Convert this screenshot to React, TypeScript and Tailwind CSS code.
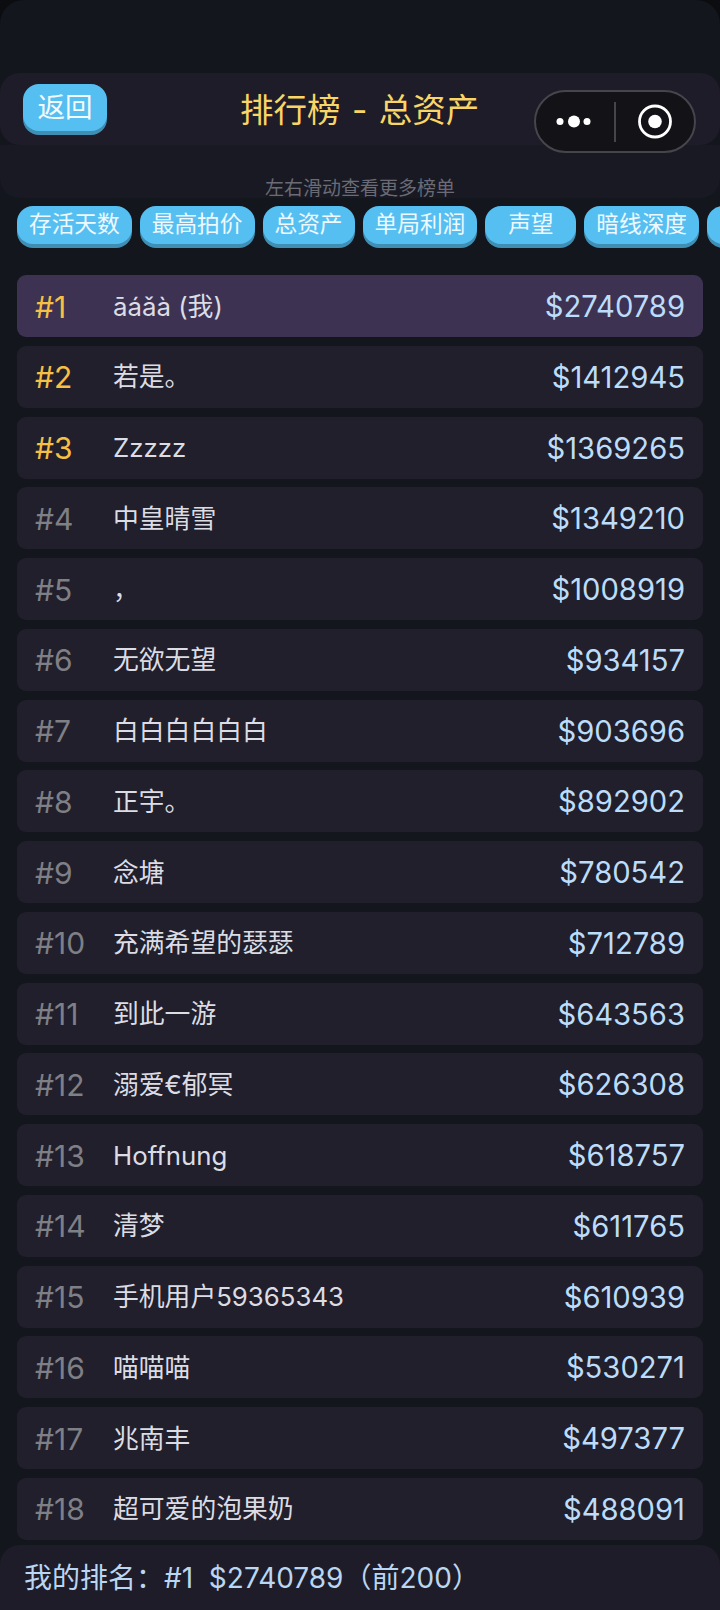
const tabs = ['存活天数', '最高拍价', '总资产', '单局利润', '声望', '暗线深度', ''];

const rows = [
  ['#1', 'āáǎà (我)', '$2740789'],
  ['#2', '若是。', '$1412945'],
  ['#3', 'Zzzzz', '$1369265'],
  ['#4', '中皇晴雪', '$1349210'],
  ['#5', '，', '$1008919'],
  ['#6', '无欲无望', '$934157'],
  ['#7', '白白白白白白', '$903696'],
  ['#8', '正宇。', '$892902'],
  ['#9', '念塘', '$780542'],
  ['#10', '充满希望的瑟瑟', '$712789'],
  ['#11', '到此一游', '$643563'],
  ['#12', '溺爱€郁冥', '$626308'],
  ['#13', 'Hoffnung', '$618757'],
  ['#14', '清梦', '$611765'],
  ['#15', '手机用户59365343', '$610939'],
  ['#16', '喵喵喵', '$530271'],
  ['#17', '兆南丰', '$497377'],
  ['#18', '超可爱的泡果奶', '$488091'],
];

function Capsule() {
  return (
    <div className="absolute left-[534px] top-[17px] flex h-[63px] w-[162px] items-center rounded-full border-2 border-[#45454b] bg-[#121217]">
      <svg width="78" height="59" viewBox="0 0 78 59" className="shrink-0">
        <circle cx="24" cy="29.5" r="3.5" fill="#fff" />
        <circle cx="38" cy="29.5" r="6" fill="#fff" />
        <circle cx="51" cy="29.5" r="3.5" fill="#fff" />
      </svg>
      <div className="h-10 w-0.5 shrink-0 bg-[#45454b]" />
      <svg width="80" height="59" viewBox="0 0 80 59" className="shrink-0">
        <circle cx="39" cy="29.5" r="15.5" fill="none" stroke="#fff" strokeWidth="2.8" />
        <circle cx="39" cy="29.5" r="6.8" fill="#fff" />
      </svg>
    </div>
  );
}

export default function App() {
  return (
    <div className="w-[720px] bg-[#0c0d11]">
      <div className="flex h-[1610px] w-[720px] flex-col overflow-hidden rounded-t-[24px] bg-[#14161d] font-['Inter','Noto_Sans_CJK_SC',sans-serif]">
        {/* Header */}
        <div className="relative mt-[73px] flex h-[72px] shrink-0 items-start rounded-[20px] bg-[#1e1c28]">
          <div className="ml-[23px] mt-[11px] flex h-[47px] w-[84px] items-start justify-center rounded-2xl bg-[#56bff2] pt-[2px] text-[27.5px] leading-[42px] text-[#f2fbff] shadow-[0_4px_0_#3f8fb5]">
            返回
          </div>
          <div className="ml-[133px] mt-[15px] text-[33.5px] leading-[44px] text-[#f9d566] [word-spacing:2px]">排行榜 - 总资产</div>
          <Capsule />
        </div>

        {/* Hint */}
        <div className="flex h-[53px] shrink-0 items-end justify-center rounded-b-[20px] bg-[#181923] text-[19px] leading-[18px] text-[#6a6b75]">
          左右滑动查看更多榜单
        </div>

        {/* Tabs */}
        <div className="mt-2 flex h-[42px] shrink-0 gap-2 overflow-hidden pl-[17px]">
          {tabs.map((tab, i) => (
            <div
              key={i}
              className="flex h-[38px] min-w-[91px] shrink-0 items-center justify-center whitespace-nowrap rounded-2xl bg-[#56bff2] px-3 pb-[2px] text-[22.7px] text-[#eef9ff] shadow-[0_4px_0_#3f8fb5]"
            >
              {tab}
            </div>
          ))}
        </div>

        {/* List */}
        <div className="mt-[27px] flex shrink-0 flex-col gap-[8.76px] px-[17px]">
          {rows.map(([rank, name, amount], i) => (
            <div
              key={rank}
              className={
                i === 0
                  ? 'flex h-[62px] items-center rounded-[9px] bg-[#3d3252] pl-[18px] pr-[18px] pt-[2px]'
                  : 'flex h-[62px] items-center rounded-[9px] bg-[#211f2b] pl-[18px] pr-[18px] pt-[2px]'
              }
            >
              <div className={i < 3 ? 'w-[78px] text-[30px] text-[#f5c044]' : 'w-[78px] text-[30px] text-[#7f7f86]'}>{rank}</div>
              <div className="flex-1 text-[25.8px] text-[#dcdce4]">{name}</div>
              <div className="text-[29.2px] text-[#bcdcfa]">{amount}</div>
            </div>
          ))}
        </div>

        {/* My rank */}
        <div className="mt-[5px] flex h-[65px] shrink-0 items-center rounded-t-[20px] bg-[#1e1c28] pl-6 pt-[2px] text-[28px] text-[#b9d6f2]">
          我的排名：#1&nbsp;&nbsp;$2740789（前200）
        </div>
      </div>
    </div>
  );
}
